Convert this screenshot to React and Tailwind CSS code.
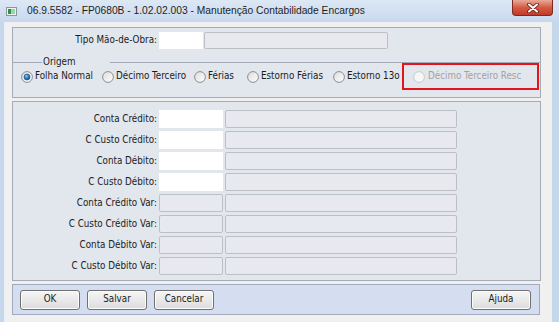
import React from "react";

const Radio = ({ checked, disabled }) => (
  <svg width="12" height="12" viewBox="0 0 12 12" className="shrink-0">
    <defs>
      <linearGradient id={disabled ? "rd" : "rn"} x1="0" y1="0" x2="1" y2="1">
        <stop offset="0" stopColor={disabled ? "#f4f4f4" : "#dcdcdc"} />
        <stop offset="1" stopColor={disabled ? "#f8f8f8" : "#ffffff"} />
      </linearGradient>
      <radialGradient id="rdot" cx="0.4" cy="0.35" r="0.7">
        <stop offset="0" stopColor="#8fd0f5" />
        <stop offset="0.5" stopColor="#2b7fc4" />
        <stop offset="1" stopColor="#174f86" />
      </radialGradient>
    </defs>
    <circle
      cx="6"
      cy="6"
      r="5.4"
      fill={`url(#${disabled ? "rd" : "rn"})`}
      stroke={disabled ? "#c9cacb" : "#8d8e8f"}
      strokeWidth="1"
    />
    {checked && <circle cx="6" cy="6" r="3" fill="url(#rdot)" stroke="#1d4d7c" strokeWidth="0.6" />}
  </svg>
);

const Field = ({ w, white }) => (
  <div
    className={
      white
        ? "h-[18px] bg-white"
        : "h-[18px] rounded-[2px] border border-[#bcbfc4] bg-[#e7e9ee]"
    }
    style={{ width: w }}
  />
);

const Row = ({ label, white }) => (
  <div className="flex h-[18px] items-center">
    <span className="w-[146px] whitespace-nowrap pr-[2px] text-right">{label}</span>
    <Field w={64} white={white} />
    <div className="ml-[2px]">
      <Field w={232} />
    </div>
  </div>
);

const Button = ({ children }) => (
  <button className="flex h-[20px] w-[60px] items-center justify-center rounded-[3px] border border-[#707070] bg-gradient-to-b from-[#f6f6f6] to-[#dcdcdc] text-[#1b1b1b] shadow-[inset_0_0_0_1px_#fcfcfc]">
    {children}
  </button>
);

const options = [
  { label: "Folha Normal", w: "w-[81px]", checked: true },
  { label: "Décimo Terceiro", w: "w-[92px]" },
  { label: "Férias", w: "w-[53px]" },
  { label: "Estorno Férias", w: "w-[86px]" },
  { label: "Estorno 13o", w: "w-[69px]" },
];

const rows = [
  ["Conta Crédito:", true],
  ["C Custo Crédito:", true],
  ["Conta Débito:", true],
  ["C Custo Débito:", true],
  ["Conta Crédito Var:", false],
  ["C Custo Crédito Var:", false],
  ["Conta Débito Var:", false],
  ["C Custo Débito Var:", false],
];

export default function App() {
  return (
    <div className="flex h-[322px] w-[559px] flex-col overflow-hidden bg-[#c6d7ec] font-['DejaVu_Sans_Condensed','Liberation_Sans',sans-serif] text-[9.75px] text-[#1b1b1b]">
      {/* Title bar */}
      <div className="flex h-[22px] shrink-0 items-center bg-gradient-to-b from-[#dde8f5] to-[#c8d8ed]">
        <svg width="11" height="9" viewBox="0 0 11 9" className="ml-[6px]">
          <rect x="0.5" y="0.5" width="10" height="8" fill="#eef3ee" stroke="#8a979a" />
          <rect x="2" y="2" width="3" height="5" fill="#2f8f4c" />
          <rect x="5" y="2" width="4" height="5" fill="#9fd3aa" />
        </svg>
        <span className="ml-[10px] font-['Liberation_Sans',sans-serif] text-[10.25px] text-[#1e1e1e]">
          06.9.5582 - FP0680B - 1.02.02.003 - Manutenção Contabilidade Encargos
        </span>
        <div className="mr-[6px] ml-auto flex h-[16px] w-[41px] self-start items-center justify-center rounded-b-[4px] border border-t-0 border-[#7d2a20] bg-gradient-to-b from-[#e9a898] via-[#d35a44] to-[#c23a27]">
          <svg width="12" height="10" viewBox="0 0 12 10">
            <path d="M2 1.5 L10 8.5 M10 1.5 L2 8.5" stroke="#5b1a12" strokeWidth="3.6" strokeLinecap="round" />
            <path d="M2 1.5 L10 8.5 M10 1.5 L2 8.5" stroke="#ffffff" strokeWidth="2" strokeLinecap="round" />
          </svg>
        </div>
      </div>

      {/* Client area */}
      <div className="ml-[4px] mr-[7px] flex flex-1 flex-col border-l border-[#e9eef5] bg-[#f0f0f0] pl-[7px] pt-[5px]">
        {/* Panel 1 */}
        <div className="flex h-[71px] w-[529px] flex-col border border-[#a4abb6] bg-[#e2e6ed] pt-[4px]">
          <div className="flex h-[17px] items-center">
            <span className="w-[146px] whitespace-nowrap pr-[2px] text-right">Tipo Mão-de-Obra:</span>
            <div className="h-[17px] w-[44px] bg-white" />
            <div className="ml-[1px] h-[17px] w-[184px] rounded-[2px] border border-[#bcbfc4] bg-[#e7e9ee]" />
          </div>
          <div className="mt-[7px] flex h-[12px] items-center">
            <div className="h-px w-[29px] bg-[#a4abb6]" />
            <span className="px-[1px] leading-[12px]">Origem</span>
            <div className="ml-[34px] h-px flex-1 bg-[#a4abb6]" />
          </div>
          <div className="-mt-[5px] flex h-[27px] items-center pl-[8px]">
            {options.map((o) => (
              <div key={o.label} className={`flex shrink-0 items-center gap-[2px] ${o.w}`}>
                <Radio checked={o.checked} />
                <span className="whitespace-nowrap">{o.label}</span>
              </div>
            ))}
            <div className="mr-[1px] flex h-full flex-1 items-center gap-[3px] border-2 border-[#e3141c] pl-[9px]">
              <Radio disabled />
              <span className="whitespace-nowrap text-[#a2a2a2]">Décimo Terceiro Resc</span>
            </div>
          </div>
        </div>

        {/* Panel 2 */}
        <div className="mt-[3px] flex h-[180px] w-[529px] flex-col gap-[3px] border border-[#a4abb6] bg-[#e2e6ed] pt-[8px]">
          {rows.map(([label, white]) => (
            <Row key={label} label={label} white={white} />
          ))}
        </div>

        {/* Button bar */}
        <div className="mt-[3px] flex h-[31px] w-[528px] items-center justify-between border border-[#a1abbd] bg-[#d5def0] pl-[7px] pr-[8px]">
          <div className="flex gap-[7px]">
            <Button>OK</Button>
            <Button>Salvar</Button>
            <Button>Cancelar</Button>
          </div>
          <Button>Ajuda</Button>
        </div>
      </div>
    </div>
  );
}
